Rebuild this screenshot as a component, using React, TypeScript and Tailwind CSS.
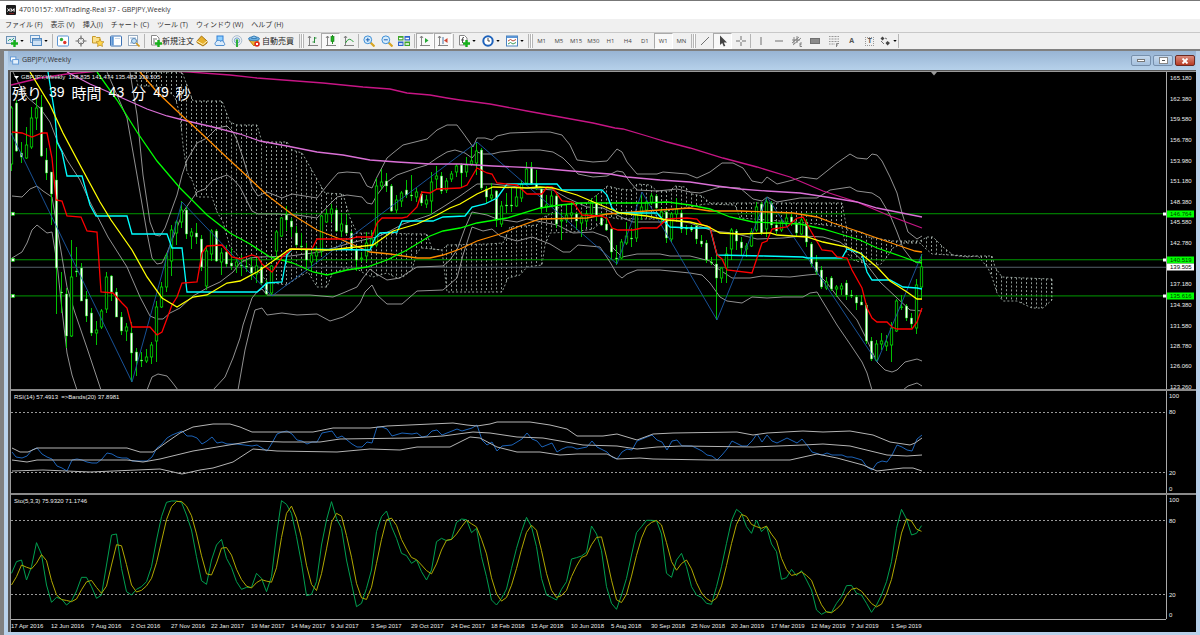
import type { ReactNode } from "react";

// bars are 5px apart, the first one sits at x = 11.5
const barX = (i: number) => 11.5 + i * 5;
const priceY = (p: number) => 78 + (165.18 - p) * 7.371;

// open, high, low, close
const candles = [
  [164, 106, 171, 108], [103, 100, 152, 151], [153, 142, 163, 157], [158, 127, 159, 145], [147, 107, 149, 118],
  [118, 97, 130, 108], [107, 95, 157, 156], [160, 148, 180, 173], [172, 172, 225, 194], [180, 128, 314, 268],
  [292, 272, 313, 293], [294, 288, 348, 336], [336, 240, 337, 277], [271, 247, 277, 272], [268, 263, 301, 301],
  [299, 291, 322, 316], [313, 308, 336, 333], [333, 321, 345, 330], [327, 309, 329, 311], [309, 272, 313, 277],
  [276, 275, 301, 292], [292, 288, 317, 317], [317, 312, 335, 331], [331, 323, 341, 327], [333, 322, 382, 353],
  [352, 348, 376, 361], [360, 352, 367, 361], [361, 349, 363, 357], [357, 342, 364, 345], [341, 301, 362, 307],
  [307, 282, 308, 287], [287, 253, 292, 256], [261, 225, 276, 230], [233, 220, 245, 222], [222, 201, 228, 210],
  [210, 206, 239, 234], [236, 228, 249, 232], [233, 223, 244, 237], [239, 235, 271, 267], [286, 247, 290, 251],
  [254, 229, 261, 231], [231, 229, 262, 261], [262, 248, 275, 253], [252, 245, 267, 264], [263, 248, 270, 266],
  [266, 257, 273, 262], [265, 255, 276, 266], [266, 260, 272, 267], [267, 257, 280, 273], [274, 258, 283, 266],
  [267, 265, 285, 283], [283, 280, 295, 294], [293, 265, 296, 266], [251, 230, 258, 232], [236, 217, 237, 218],
  [215, 206, 231, 220], [221, 218, 237, 227], [233, 226, 247, 245], [246, 233, 251, 247], [250, 243, 268, 260],
  [262, 251, 272, 255], [256, 246, 262, 252], [251, 215, 256, 216], [222, 209, 223, 214], [214, 204, 222, 209],
  [210, 208, 232, 231], [231, 213, 237, 224], [225, 215, 234, 233], [233, 231, 251, 249], [250, 248, 271, 260],
  [259, 252, 262, 258], [256, 232, 262, 243], [247, 230, 248, 239], [245, 178, 247, 186], [186, 169, 190, 182],
  [181, 173, 192, 186], [186, 184, 212, 211], [210, 195, 213, 200], [201, 191, 207, 193], [190, 180, 198, 195],
  [195, 175, 201, 196], [197, 188, 202, 192], [194, 191, 206, 203], [204, 195, 208, 200], [201, 172, 214, 182],
  [179, 166, 190, 176], [176, 172, 194, 191], [190, 178, 193, 181], [179, 171, 182, 174], [172, 164, 177, 166],
  [165, 163, 187, 173], [172, 157, 177, 165], [164, 147, 166, 161], [163, 142, 175, 151], [150, 148, 190, 188],
  [189, 186, 203, 197], [198, 183, 200, 195], [191, 190, 227, 220], [224, 201, 227, 206], [205, 193, 213, 206],
  [205, 188, 212, 206], [206, 187, 207, 197], [198, 180, 202, 184], [183, 162, 184, 169], [167, 162, 185, 184],
  [184, 170, 190, 188], [189, 188, 213, 208], [207, 195, 212, 205], [205, 191, 207, 196], [196, 193, 228, 224],
  [221, 212, 240, 220], [220, 204, 223, 215], [215, 202, 220, 213], [214, 212, 230, 221], [223, 212, 237, 217],
  [221, 210, 227, 214], [214, 198, 217, 202], [203, 195, 221, 215], [218, 216, 226, 225], [224, 217, 231, 230],
  [229, 228, 259, 252], [258, 245, 265, 259], [258, 239, 259, 242], [243, 222, 245, 236], [238, 228, 247, 239],
  [238, 212, 242, 214], [213, 194, 220, 207], [210, 200, 213, 202], [202, 193, 205, 196], [196, 194, 209, 208],
  [217, 208, 223, 212], [212, 210, 243, 238], [239, 212, 242, 214], [214, 198, 222, 209], [213, 210, 233, 229],
  [228, 225, 235, 229], [227, 225, 232, 230], [226, 224, 244, 239], [241, 235, 247, 244], [243, 240, 263, 260],
  [262, 257, 265, 263], [264, 255, 320, 278], [278, 267, 283, 268], [268, 247, 283, 254], [249, 228, 260, 230],
  [231, 229, 250, 241], [242, 237, 255, 248], [249, 243, 257, 246], [246, 228, 247, 232], [230, 202, 232, 207],
  [204, 202, 235, 233], [229, 197, 237, 202], [203, 201, 228, 225], [225, 221, 234, 231], [230, 219, 232, 222],
  [222, 213, 227, 218], [217, 214, 226, 222], [223, 221, 237, 233], [234, 217, 235, 220], [222, 219, 247, 242],
  [244, 242, 267, 264], [262, 255, 275, 272], [270, 266, 289, 287], [288, 277, 290, 282], [278, 276, 291, 289],
  [289, 285, 297, 287], [289, 283, 295, 286], [283, 280, 300, 295], [295, 290, 298, 296], [297, 295, 310, 303],
  [302, 295, 305, 305], [305, 303, 344, 341], [341, 337, 361, 359], [360, 340, 362, 344], [344, 333, 350, 341],
  [346, 335, 351, 342], [345, 322, 362, 328], [331, 299, 332, 301], [307, 295, 310, 307], [306, 304, 321, 318],
  [318, 313, 328, 324], [328, 279, 334, 285], [287, 254, 298, 267],
];

const bands = [
  "13,72 20,86 28,98 40,108 50,122 58,143 67,160 80,180 90,202 108,237 127,267 140,297 150,316 157,319 163,319 170,313 180,308 193,296 207,288 220,282 233,272 240,263 250,258 260,257 290,256 305,254 320,252 330,249 347,244 363,240 377,237 390,231 403,224 430,215 443,207 460,196 477,184 493,184 527,188 553,190 567,198 587,207 603,208 623,218 633,222 660,222 673,220 690,223 713,231 733,233 757,239 783,238 803,236 823,237 840,242 853,252 867,265 880,282 897,298 910,310 922,311",
  "130,72 137,115 143,175 150,222 155,235 160,236 165,228 177,195 182,175 187,160 197,143 207,138 217,128 227,126 233,132 237,140 243,158 252,187 258,196 267,192 282,198 292,194 317,198 330,182 338,173 347,172 360,173 367,186 372,188 377,177 387,158 393,153 403,145 427,139 437,130 447,125 457,125 463,133 473,147 477,138 485,138 492,140 497,136 510,133 537,132 550,132 562,135 570,145 577,160 593,162 607,161 617,149 622,152 627,162 637,174 657,174 663,172 687,174 697,178 710,172 722,163 733,163 743,168 752,181 762,183 767,177 777,184 793,180 802,177 817,179 827,171 837,163 850,154 857,158 867,159 872,154 877,155 882,161 890,177 897,193 902,213 908,232 917,239 922,236",
  "107,72 127,118 137,175 147,233 152,258 157,264 162,263 167,253 172,240 178,225 183,212 197,192 205,189 213,180 227,175 233,179 240,187 252,211 258,214 277,214 297,215 317,218 327,207 337,197 347,195 362,197 367,203 372,204 377,195 387,182 397,175 417,168 427,165 437,158 447,152 455,150 465,153 472,158 477,152 483,154 492,154 500,152 520,150 540,150 553,152 563,158 570,165 578,174 593,177 607,176 617,171 623,172 630,182 637,190 657,191 677,189 690,192 700,193 720,187 740,188 753,199 762,201 767,197 777,202 800,198 817,198 830,190 850,187 857,191 872,193 880,198 890,215 897,232 903,248 912,260 917,263 922,260",
  "12,196 22,197 30,189 37,186 43,191 52,197 55,215 67,287 75,313 87,348 101,390",
  "12,258 22,252 27,243 32,230 37,225 47,233 52,232 57,263 62,310 67,353 72,375 77,390",
  "147,390 152,377 158,374 167,376 172,382 178,390",
  "213,390 225,377 233,358 240,338 243,325 252,298 257,292 262,289 267,295 287,295 310,295 333,297 343,293 357,287 363,278 370,269 375,273 387,280 400,278 407,273 417,267 443,266 450,260 457,250 465,228 472,212 487,215 497,219 517,222 527,219 547,223 557,225 573,233 593,232 607,237 613,248 622,257 637,254 660,254 670,256 690,256 710,261 717,268 732,278 750,278 762,276 790,277 807,275 818,274 827,283 840,300 857,320 867,340 877,362 885,370 892,372 897,370 905,362 917,359 922,361",
  "238,390 245,350 251,325 255,310 262,308 267,315 282,313 297,315 317,314 330,321 343,317 353,311 360,303 365,292 372,285 377,295 387,304 402,304 417,291 443,290 457,278 463,255 472,227 483,231 492,229 500,236 517,241 532,237 550,244 563,252 570,252 578,245 600,247 610,262 617,274 622,278 627,274 637,270 660,270 690,273 702,275 710,283 720,297 727,301 742,303 752,297 767,298 783,297 803,297 810,293 817,292 823,302 837,325 852,347 862,362 867,373 872,390",
  "903,390 908,386 917,383 922,386",
];

const averages = [
  { color: "#c71585", points: "11,85 40,78 67,74 100,71 150,70 190,72 230,75 257,78 323,83 363,87 390,89 407,93 430,95 447,98 460,100 490,104 527,111 560,117 593,123 615,128 623,129 647,136 667,142 690,148 723,158 757,167 790,177 823,191 857,202 890,216 922,228" },
  { color: "#da70d6", points: "67,72 90,84 120,97 147,109 167,116 187,121 213,127 240,134 260,141 287,146 317,152 343,155 370,160 397,162 430,164 460,164 493,166 537,168 583,172 610,174 627,177 660,180 690,182 717,186 740,189 767,191 800,193 833,198 857,202 877,208 897,212 922,217" },
  { color: "#ff8c00", points: "140,72 157,92 177,111 200,132 220,151 235,165 250,179 267,195 293,215 317,230 340,239 370,252 390,254 417,258 430,258 443,255 460,249 477,241 500,234 520,226 540,219 587,218 607,214 633,212 660,210 690,208 710,211 740,211 770,212 793,213 817,217 833,223 857,231 877,238 903,247 915,251 922,252" },
  { color: "#00ff00", points: "97,72 117,100 137,132 157,161 180,188 207,215 230,233 250,244 270,257 293,263 313,272 327,275 347,270 367,267 387,260 407,250 430,236 443,231 460,228 477,223 507,218 540,208 560,205 580,203 627,203 647,203 667,202 690,205 710,209 730,217 753,222 800,224 823,229 840,234 860,240 877,248 903,257 917,262 922,263" },
  { color: "#00ffff", points: "48,72 55,115 57,142 62,152 67,176 82,176 90,205 96,216 127,216 132,234 167,234 172,248 182,248 187,292 257,292 267,283 282,282 287,255 292,249 370,250 375,238 380,233 397,232 402,221 433,221 443,217 465,216 472,207 485,204 497,198 507,184 557,184 562,190 602,190 607,195 612,208 618,213 657,213 663,220 670,227 690,228 710,228 717,255 765,256 803,257 807,258 842,258 847,249 862,254 867,272 872,280 890,280 903,287 917,288 922,289" },
  { color: "#ff0000", points: "12,132 22,133 32,137 42,133 47,133 52,158 56,200 62,201 67,216 81,217 87,231 97,232 101,292 113,293 122,303 127,308 132,327 150,327 157,335 162,332 172,305 177,297 182,283 197,282 202,253 207,246 222,245 232,257 240,259 252,255 258,257 262,264 272,272 282,257 292,249 312,249 317,239 350,239 357,237 372,237 377,223 382,218 402,218 407,217 417,207 422,192 430,193 437,189 460,188 467,185 477,168 487,173 492,174 497,183 517,185 527,194 542,194 547,187 552,187 562,201 573,202 582,215 600,216 607,218 612,228 618,230 633,230 642,228 657,228 667,219 687,218 697,219 702,225 710,227 717,255 722,259 727,270 752,273 762,243 767,241 772,229 787,227 797,218 803,217 812,233 822,250 832,251 837,257 847,258 852,270 862,288 867,308 872,318 877,322 887,322 892,327 897,329 912,329 917,322 922,308" },
  { color: "#ffff00", points: "30,72 50,105 63,133 80,165 100,202 111,220 132,250 147,277 162,298 177,307 193,297 207,295 227,283 240,281 257,272 273,261 290,249 330,250 347,248 373,245 393,231 417,224 437,215 450,208 460,204 477,194 493,187 527,188 540,187 553,188 577,195 603,206 620,213 647,216 667,220 690,222 707,226 720,233 740,234 770,233 777,235 807,237 823,242 847,247 860,253 877,267 890,281 907,292 917,299 922,299" },
];

const zigzag = "11,133 132,382 182,202 272,296 477,142 617,264 642,192 717,320 767,197 877,362 922,254";

// the two edges of the cloud
const spanA: number[][] = [
  [135, 72], [182, 72], [187, 85], [193, 101], [222, 101], [230, 122], [237, 125], [257, 125], [262, 142], [287, 142],
  [292, 150], [302, 153], [313, 172], [325, 193], [343, 194], [350, 218], [357, 233], [427, 234], [432, 249], [442, 250],
  [447, 245], [487, 244], [503, 243], [510, 227], [537, 225], [542, 218], [552, 213], [562, 205], [587, 203], [593, 198],
  [603, 190], [607, 186], [620, 189], [632, 190], [637, 184], [650, 185], [657, 191], [670, 191], [675, 186], [685, 187],
  [692, 194], [702, 196], [710, 203], [842, 203], [847, 230], [862, 232], [868, 237], [887, 240], [892, 241], [920, 241],
  [927, 237], [933, 237], [943, 247], [953, 255], [967, 256], [992, 256], [995, 267], [1002, 277], [1025, 278], [1052, 279],
];
const spanB: number[][] = [
  [135, 72], [138, 86], [157, 86], [167, 90], [175, 97], [180, 115], [183, 145], [187, 172], [193, 182], [197, 197],
  [212, 197], [217, 212], [223, 222], [230, 247], [240, 258], [250, 265], [260, 273], [267, 282], [287, 285], [297, 278],
  [308, 272], [317, 287], [327, 287], [332, 274], [343, 269], [357, 269], [367, 275], [373, 277], [387, 273], [397, 278],
  [403, 277], [412, 270], [417, 252], [422, 248], [433, 249], [442, 250], [447, 292], [502, 292], [508, 278], [520, 275],
  [527, 267], [542, 265], [545, 245], [550, 233], [573, 232], [593, 229], [600, 223], [607, 217], [620, 219], [657, 219],
  [660, 212], [690, 207], [705, 204], [735, 205], [740, 218], [807, 223], [842, 227], [847, 253], [853, 260], [867, 264],
  [880, 265], [887, 257], [893, 248], [903, 243], [920, 243], [925, 248], [932, 254], [950, 255], [967, 257], [978, 256],
  [988, 268], [992, 277], [997, 293], [1003, 301], [1017, 301], [1032, 308], [1043, 308], [1052, 300], [1052, 279],
];

const yAt = (line: number[][], x: number) => {
  const k = line.findIndex((p) => p[0] >= x);
  if (k <= 0) return line[0][1];
  const [x0, y0] = line[k - 1];
  const [x1, y1] = line[k];
  return y0 + ((y1 - y0) * (x - x0)) / (x1 - x0);
};

const rsi =
  "12,452 16,457 22,458 27,456 32,450 37,448 42,454 47,457 52,459 57,466 62,468 67,471 72,460 77,459 82,460 87,462 92,463 97,463 102,459 107,453 112,454 117,457 122,458 127,458 132,461 147,461 152,457 157,448 162,444 167,438 172,435 182,431 187,436 192,436 197,438 202,444 207,441 212,437 217,443 222,442 227,444 237,444 252,446 257,445 262,448 267,451 272,443 277,434 282,432 287,431 292,434 297,440 302,441 307,444 312,442 317,442 322,433 332,431 337,438 342,436 347,440 352,444 357,447 362,447 367,442 372,443 377,427 382,427 387,429 392,436 402,433 412,434 417,433 422,437 427,436 432,431 437,430 442,435 447,433 457,429 462,431 472,428 477,425 482,440 487,445 492,442 497,451 502,446 512,445 517,442 522,439 527,433 532,439 537,441 542,447 547,445 552,443 557,452 562,449 567,447 572,447 577,449 587,447 592,441 597,447 607,452 612,457 617,459 622,452 627,449 632,450 637,441 642,439 652,435 657,440 662,442 667,450 672,441 677,440 682,446 692,446 702,451 707,455 712,456 717,460 722,455 727,449 732,441 742,446 747,446 752,441 757,434 762,442 767,435 772,441 777,443 787,438 797,443 802,439 807,445 812,452 822,455 827,453 832,455 842,455 847,457 852,457 862,460 867,467 872,470 877,463 882,461 887,462 892,455 897,445 902,447 907,450 912,451 917,439 922,435";
const rsiBands = [
  "12,448 20,452 28,452 37,448 127,448 140,452 153,452 167,442 180,433 193,427 213,424 230,424 240,427 252,432 313,432 333,428 370,428 387,426 453,423 467,425 477,426 490,424 497,422 530,422 550,425 567,429 577,436 603,436 617,434 637,440 653,434 673,433 737,432 753,435 767,433 803,431 823,432 850,431 873,435 890,442 910,445 915,443 922,438",
  "12,460 27,462 37,460 127,460 143,462 160,459 193,451 217,447 253,441 283,442 320,442 340,439 410,438 443,436 473,432 490,433 517,437 543,438 583,445 617,446 637,449 657,447 683,446 753,447 803,445 823,444 850,446 887,455 907,456 922,455",
  "12,471 43,470 90,472 160,469 182,474 200,470 213,468 233,462 253,449 277,451 337,452 370,449 400,450 417,447 450,447 470,437 480,438 497,447 517,452 540,452 560,455 577,454 607,454 617,459 640,458 653,459 710,460 790,460 817,454 837,458 863,465 877,471 903,468 913,468 922,471",
];

// one sample per bar, three units to the pixel
const stoMain = [
  565, 530, 525, 585, 545, 473, 508, 600, 652, 637, 642, 660, 648, 618, 577, 577, 605, 640, 630, 540, 450, 447, 550, 620,
  630, 613, 605, 590, 545, 465, 395, 352, 348, 348, 352, 390, 435, 515, 587, 598, 525, 480, 463, 520, 548, 590, 613, 607,
  607, 565, 580, 620, 575, 450, 347, 358, 385, 455, 535, 632, 628, 590, 480, 405, 350, 400, 430, 525, 595, 665, 655, 610,
  555, 440, 395, 378, 425, 460, 505, 512, 535, 525, 560, 585, 555, 470, 460, 467, 463, 412, 402, 404, 443, 430,
  515, 575, 645, 660, 640, 612, 550, 490, 440, 397, 425, 485, 580, 630, 637, 645, 613, 590, 522, 518, 513, 502, 423, 447,
  497, 605, 655, 673, 630, 580, 510, 443, 425, 406, 406, 407, 447, 565, 577, 525, 505, 545, 605, 630, 637, 655, 658, 605,
  545, 475, 407, 373, 385, 425, 445, 405, 440, 425, 477, 500, 583, 578, 553, 572, 557, 585, 615, 675, 688, 680, 682, 655,
  635, 602, 601, 625, 630, 655, 682, 660, 630, 590, 530, 430, 373, 402, 450, 445, 422,
];
const stoSignal = stoMain.map((v, i) =>
  i === 0 ? 600 : i === 1 ? 575 : (v + stoMain[i - 1] + stoMain[i - 2]) / 3
);
const toPoints = (values: number[]) =>
  values.map((v, i) => `${barX(i)},${385 + v / 3}`).join(" ");

const prices = [
  165.18, 162.38, 159.58, 156.78, 153.98, 151.18, 148.38, 145.58, 142.78, 137.18, 134.38, 131.58, 128.78, 126.06, 123.26,
];
const orderLines = [146.764, 140.519, 135.616];
const dates = [
  "17 Apr 2016", "12 Jun 2016", "7 Aug 2016", "2 Oct 2016", "27 Nov 2016", "22 Jan 2017", "19 Mar 2017", "14 May 2017",
  "9 Jul 2017", "3 Sep 2017", "29 Oct 2017", "24 Dec 2017", "18 Feb 2018", "15 Apr 2018", "10 Jun 2018", "5 Aug 2018",
  "30 Sep 2018", "25 Nov 2018", "20 Jan 2019", "17 Mar 2019", "12 May 2019", "7 Jul 2019", "1 Sep 2019",
];
const menus = ["ファイル (F)", "表示 (V)", "挿入(I)", "チャート (C)", "ツール (T)", "ウィンドウ (W)", "ヘルプ (H)"];
const timeframes = ["M1", "M5", "M15", "M30", "H1", "H4", "D1", "W1", "MN"];

const Icon = ({ children }: { children: ReactNode }) => (
  <svg viewBox="0 0 12 12" className="h-3 w-3 shrink-0" fill="none" stroke="#707070" strokeWidth="1">
    {children}
  </svg>
);

const Plus = () => <path d="M8.500 5v7M5 8.500h7" stroke="#16b01c" strokeWidth="2.400" />;
const Axes = () => <path d="M2.500 1v10M1 10.500h10M1 3l1.500-2L4 3" stroke="#777" strokeWidth="0.900" />;

const Caret = () => (
  <svg viewBox="0 0 5 3" className="h-[2px] w-1 shrink-0 fill-black">
    <path d="M0 0h5L2.500 3z" />
  </svg>
);

const Sep = () => <span className="mx-px h-3.5 w-px shrink-0 bg-[#b5b5b5]" />;

const Grip = () => <span className="h-3.5 w-[3px] shrink-0 border-x border-[#b5b5b5] bg-white" />;

type ToolProps = { label: string; active?: boolean; caret?: boolean; children: ReactNode };

const Tool = ({ label, active, caret, children }: ToolProps) => (
  <button
    aria-label={label}
    className={
      active
        ? "flex h-4 flex-1 items-center justify-center gap-0.5 border border-b-white border-l-[#aaa] border-r-white border-t-[#aaa] bg-[#f8f8f8]"
        : "flex h-4 flex-1 items-center justify-center gap-0.5"
    }
  >
    {children}
    {caret && <Caret />}
  </button>
);

const Toolbar = () => (
  <div className="flex h-[17px] items-center border-t border-[#c8c8c8] bg-[#f0f0f0] pl-[3px] text-[#222]">
    <div className="flex w-[48px]">
      <Tool label="新規チャート" caret>
        <Icon>
          <rect x="0.500" y="1.500" width="9" height="7" fill="#dfeaf4" stroke="#6b8fb3" />
          <path d="M2 6l2-2 1.500 1.500L8 3" stroke="#3a8" />
          <Plus />
        </Icon>
      </Tool>
      <Tool label="プロファイル" caret>
        <Icon>
          <rect x="0.500" y="0.500" width="9" height="7" fill="#e9f2fb" stroke="#6d9bc9" />
          <rect x="2.500" y="3.500" width="9" height="7" fill="#cfe2f5" stroke="#4f86be" />
          <path d="M3 5h8" stroke="#4f86be" />
        </Icon>
      </Tool>
    </div>
    <Sep />
    <div className="flex w-[89px]">
      <Tool label="気配値表示">
        <Icon>
          <rect x="0.500" y="1" width="11" height="10" rx="1" fill="#fff" stroke="#5b95d5" />
          <circle cx="4.500" cy="4.500" r="1.700" fill="#2ea836" stroke="none" />
          <circle cx="7.800" cy="7.500" r="1.700" fill="#e03428" stroke="none" />
        </Icon>
      </Tool>
      <Tool label="データウィンドウ">
        <Icon>
          <circle cx="6" cy="6" r="3" />
          <path d="M6 0.500v4M6 7.500v4M0.500 6h4M7.500 6h4" strokeWidth="1.200" />
        </Icon>
      </Tool>
      <Tool label="ナビゲーター">
        <Icon>
          <path d="M0.500 1.500h3l1 1H8V8H0.500z" fill="#fbe08a" stroke="#c79a2b" />
          <path d="M8 4l1.200 2.500 2.800.3-2 1.900.5 2.800L8 10.200 5.500 11.500 6 8.700l-2-1.900 2.800-.3z" fill="#ffd54a" stroke="#b8891f" strokeWidth="0.700" />
        </Icon>
      </Tool>
      <Tool label="ターミナル">
        <Icon>
          <rect x="0.500" y="1" width="11" height="10" rx="1" fill="#fff" stroke="#3d72b4" />
          <path d="M2.500 1.500v9" stroke="#5b95d5" strokeWidth="2.500" />
          <path d="M5 3.500h5" stroke="#c6d6e8" />
        </Icon>
      </Tool>
      <Tool label="ストラテジーテスター">
        <Icon>
          <rect x="0.500" y="0.500" width="9" height="10" fill="#fff" stroke="#9aacbf" />
          <path d="M2 3h6M2 8h2" stroke="#8fb0d4" />
          <circle cx="6" cy="6" r="2.500" fill="#bfe0f8" stroke="#5b87b4" />
          <path d="M8 8l3.500 3.500" stroke="#d19a1d" strokeWidth="1.600" />
        </Icon>
      </Tool>
    </div>
    <Sep />
    <button className="flex items-center pl-1">
      <Icon>
        <path d="M1.500 0.500h5L9 3v7H1.500z" fill="#fff" stroke="#888" />
        <path d="M3 4h4M3 6h2M3 8h2" />
        <Plus />
      </Icon>
      <span className="w-[31px] whitespace-nowrap text-[8px]">新規注文</span>
    </button>
    <div className="flex w-[53px]">
      <Tool label="メタエディター">
        <Icon>
          <path d="M1 6l4.500-5L11 6v2L7 11 1 7.500z" fill="#e7b02c" stroke="#a87512" />
          <path d="M1 6l6 3.500L11 6" stroke="#fff1bd" />
        </Icon>
      </Tool>
      <Tool label="クラウド">
        <Icon>
          <rect x="3" y="1" width="6" height="5" fill="#8fd0ff" stroke="#2e7fd6" />
          <path d="M2 10.500a2 2 0 010-3.500 2.500 2.500 0 014.500-.5A2 2 0 0110 8a1.400 1.400 0 010 2.500z" fill="#dcecfb" stroke="#4f8fd0" />
        </Icon>
      </Tool>
      <Tool label="シグナル">
        <Icon>
          <circle cx="6" cy="5.500" r="4.800" stroke="#a9bdd0" />
          <circle cx="6" cy="5.500" r="2.600" stroke="#6fa3d8" />
          <path d="M6 5.500V12" stroke="#2fae3a" strokeWidth="2" />
          <circle cx="6" cy="5.500" r="1.200" fill="#2fae3a" stroke="none" />
        </Icon>
      </Tool>
    </div>
    <button className="flex items-center pl-0.5">
      <Icon>
        <path d="M1 5l5 6 4-4V5z" fill="#f0b52d" stroke="#b47d12" />
        <ellipse cx="6" cy="3.800" rx="5.500" ry="2" fill="#69aee0" stroke="#3a7fb8" />
        <path d="M3.500 3.500a2.500 2.500 0 015 0z" fill="#8cc6ee" stroke="#3a7fb8" />
        <circle cx="9" cy="9" r="2.800" fill="#e02a1c" stroke="none" />
        <rect x="8" y="8" width="2" height="2" fill="#fff" stroke="none" />
      </Icon>
      <span className="w-[38px] whitespace-nowrap pl-0.5 text-left text-[8px]">自動売買</span>
    </button>
    <Sep />
    <Grip />
    <div className="flex w-[53px]">
      <Tool label="バーチャート">
        <Icon>
          <Axes />
          <path d="M7.500 2v6M7.500 3h2M5.500 7h2" stroke="#2a8f3a" />
        </Icon>
      </Tool>
      <Tool label="ローソク足" active>
        <Icon>
          <Axes />
          <path d="M7.500 0v9" stroke="#1b9a1b" />
          <rect x="6" y="1.500" width="3" height="5" fill="#22b022" stroke="#127a12" strokeWidth="0.600" />
        </Icon>
      </Tool>
      <Tool label="ラインチャート">
        <Icon>
          <Axes />
          <path d="M2.500 8Q6 1 10.500 7" stroke="#2a9f3a" />
        </Icon>
      </Tool>
    </div>
    <Sep />
    <div className="flex w-[53px]">
      <Tool label="ズームイン">
        <Icon>
          <path d="M7.500 7.500l4 4" stroke="#d9a520" strokeWidth="2.200" />
          <circle cx="4.800" cy="4.800" r="3.900" fill="#d6ecfc" stroke="#3f8fd6" />
          <path d="M2.800 4.800h4M4.800 2.800v4" stroke="#1f63b4" />
        </Icon>
      </Tool>
      <Tool label="ズームアウト">
        <Icon>
          <path d="M7.500 7.500l4 4" stroke="#d9a520" strokeWidth="2.200" />
          <circle cx="4.800" cy="4.800" r="3.900" fill="#d6ecfc" stroke="#3f8fd6" />
          <path d="M2.800 4.800h4" stroke="#1f63b4" />
        </Icon>
      </Tool>
      <Tool label="整列">
        <Icon>
          <path d="M0 1h5.500v4.500H0zM6.500 6.500H12V11H6.500z" fill="#3fa52a" stroke="none" />
          <path d="M6.500 1H12v4.500H6.500zM0 6.500h5.500V11H0z" fill="#2d62c8" stroke="none" />
          <path d="M1 3.500h3.500M7.500 3.500H11M1 9h3.500M7.500 9H11" stroke="#fff" strokeWidth="1.500" />
        </Icon>
      </Tool>
    </div>
    <Sep />
    <div className="flex w-[36px]">
      <Tool label="自動スクロール" active>
        <Icon>
          <Axes />
          <path d="M6 3v5l3.500-2.500z" fill="#24a834" stroke="none" />
        </Icon>
      </Tool>
      <Tool label="チャートシフト" active>
        <Icon>
          <Axes />
          <path d="M6 2v7" stroke="#4d78a8" />
          <path d="M10.500 3v5L7 5.500z" fill="#d0432f" stroke="none" />
        </Icon>
      </Tool>
    </div>
    <Sep />
    <div className="flex w-[72px]">
      <Tool label="インディケータ" caret>
        <Icon>
          <path d="M1.500 0.500h5L9 3v7H1.500z" fill="#fff" stroke="#888" />
          <path d="M6 2.500Q4.500 2 4.500 4v4M3 5h3" stroke="#555" />
          <Plus />
        </Icon>
      </Tool>
      <Tool label="時間足設定" caret>
        <Icon>
          <circle cx="6" cy="6" r="4.700" fill="#fff" stroke="#1d62bb" strokeWidth="2" />
          <path d="M6 3v3h2" stroke="#444" />
        </Icon>
      </Tool>
      <Tool label="定型チャート" caret>
        <Icon>
          <rect x="0.500" y="1" width="11" height="10" fill="#fff" stroke="#4b83c0" />
          <path d="M1 2h10" stroke="#5b95d5" strokeWidth="2" />
          <path d="M2 6l2.500-1.500L7 6l3-1.500" stroke="#b74a3a" />
          <path d="M2 9l2.500-1.500L7 9l3-1.500" stroke="#3e9a5a" />
        </Icon>
      </Tool>
    </div>
    <Sep />
    <Grip />
    <div className="flex w-[157px] text-[6px] text-[#444]">
      {timeframes.map((tf) => (
        <Tool key={tf} label={tf} active={tf === "W1"}>
          {tf}
        </Tool>
      ))}
    </div>
    <Sep />
    <Grip />
    <div className="flex w-[53px]">
      <Tool label="ライン">
        <Icon>
          <path d="M2 10l8-8" />
        </Icon>
      </Tool>
      <Tool label="カーソル" active>
        <Icon>
          <path d="M3 0.500v9.500l2.200-2 1.600 3.500 1.500-.8L6.800 7.500H10z" fill="#444" stroke="none" />
        </Icon>
      </Tool>
      <Tool label="十字カーソル">
        <Icon>
          <path d="M6 1v4M6 7v4M1 6h4M7 6h4" />
        </Icon>
      </Tool>
    </div>
    <Sep />
    <div className="flex w-[145px]">
      <Tool label="垂直線">
        <Icon>
          <path d="M6 2v8" />
        </Icon>
      </Tool>
      <Tool label="水平線">
        <Icon>
          <path d="M2 6h8" />
        </Icon>
      </Tool>
      <Tool label="チャネル">
        <Icon>
          <path d="M1 8l7-6M2 10l8-7M1 5h8M3 2v7M6 1v7" strokeWidth="0.800" />
          <path d="M11 8H9v3.500h2M9 9.700h1.500" strokeWidth="0.800" />
        </Icon>
      </Tool>
      <Tool label="長方形">
        <Icon>
          <rect x="1.500" y="3.500" width="9" height="5" fill="#8a8a8a" />
        </Icon>
      </Tool>
      <Tool label="フィボナッチ">
        <Icon>
          <path d="M1 1.500h10M1 4h10M1 6.500h10M1 9h6" strokeDasharray="1 0.500" strokeWidth="0.700" />
          <path d="M8.500 12V8.500H11M8.500 10H10" strokeWidth="0.800" />
        </Icon>
      </Tool>
      <Tool label="テキスト">
        <span className="text-[7px] font-bold text-[#555]">A</span>
      </Tool>
      <Tool label="テキストラベル">
        <span className="flex h-[9px] w-[9px] items-center justify-center border border-dotted border-[#999] text-[7px] font-bold text-[#555]">
          T
        </span>
      </Tool>
      <Tool label="矢印" caret>
        <Icon>
          <path d="M3.500 1.500l2 2-2 2-2-2zM8.500 6l2.500 2-2.500 2.500L6.500 8z" fill="#444" stroke="none" />
          <path d="M2 6l3 3M6 3l2 1" />
        </Icon>
      </Tool>
    </div>
    <Sep />
  </div>
);

const AxisLabel = ({ top, children }: { top: number; children: ReactNode }) => (
  <span className="absolute left-[3px] -translate-y-1/2 leading-[8px]" style={{ top }}>
    {children}
  </span>
);

const Levels = ({ levels }: { levels: number[][] }) => (
  <div className="relative w-[30px] shrink-0 border-l border-[#aaa]">
    {levels.map(([value, top]) => (
      <span key={value} className="absolute left-0.5 -translate-y-1/2 leading-[8px]" style={{ top }}>
        {value}
      </span>
    ))}
  </div>
);

const Digits = ({ children }: { children: ReactNode }) => (
  <span className="text-sm leading-4">{children}</span>
);

const PricePane = () => {
  const cloud: number[] = [];
  for (let x = 136.5; x < 1052; x += 5) cloud.push(x);

  return (
    <div className="relative flex border-b-2 border-[#8a8a8a]">
      <svg className="h-[317px] min-w-0 flex-1" fill="none">
        <g transform="translate(-11 -72)">
          <g stroke="#b4c2ba" strokeWidth="0.800" strokeDasharray="2 2">
            {cloud.map((x) => (
              <path key={x} d={`M${x} ${yAt(spanA, x)}V${yAt(spanB, x)}`} />
            ))}
            <polyline points={spanA.join(" ")} />
            <polyline points={spanB.join(" ")} />
          </g>
          {orderLines.map((p) => (
            <path key={p} d={`M11 ${priceY(p)}h4000`} stroke="#009a00" />
          ))}
          <path d={`M11 ${priceY(139.505)}h4000`} stroke="#56606a" />
          {bands.map((points) => (
            <polyline key={points} points={points} stroke="#a0a0a0" strokeWidth="0.900" />
          ))}
          {candles.map(([open, high, low, close], i) => (
            <g key={i} stroke="#00d800">
              <path d={`M${barX(i)} ${high}V${low}`} strokeWidth="0.900" />
              <rect
                x={barX(i) - 1.2}
                y={Math.min(open, close)}
                width="2.400"
                height={Math.max(Math.abs(open - close), 0.5)}
                fill={close > open ? "#fff" : "#000"}
                strokeWidth={close > open ? 0.5 : 0.8}
              />
            </g>
          ))}
          <polyline points={zigzag} stroke="#1b5aa6" strokeWidth="0.900" />
          {averages.map((line) => (
            <polyline key={line.color} points={line.points} stroke={line.color} strokeWidth="1.300" />
          ))}
          {orderLines.map((p) => (
            <rect key={p} x="11.500" y={priceY(p) - 1.5} width="3" height="3" fill="#fff" stroke="#00e000" strokeWidth="0.600" />
          ))}
          <path d="M931 72h6l-3 3.500z" fill="#999" />
        </g>
      </svg>
      <div className="relative w-[30px] shrink-0 border-l border-[#aaa]">
        {prices.map((p) => (
          <AxisLabel key={p} top={priceY(p) - 72}>
            {p.toFixed(3)}
          </AxisLabel>
        ))}
        {orderLines.map((p) => (
          <span
            key={p}
            className="absolute left-0 w-[27px] -translate-y-1/2 bg-[#00ff00] pl-[3px] leading-[7px] text-[#004000]"
            style={{ top: priceY(p) - 72 }}
          >
            {p.toFixed(3)}
            <i className="absolute -left-1 top-0.5 h-[3px] w-[3px] bg-white" />
          </span>
        ))}
        <span
          className="absolute left-0 w-[27px] -translate-y-1/2 bg-white pl-[3px] leading-[7px] text-black"
          style={{ top: priceY(139.505) - 72 }}
        >
          139.505
        </span>
      </div>
      <p className="absolute left-[3px] top-px flex items-center gap-0.5 whitespace-pre leading-[8px]">
        <svg viewBox="0 0 5 3" className="h-[3px] w-[5px] fill-white">
          <path d="M0 0h5L2.500 3z" />
        </svg>
        GBPJPY,Weekly  138.835 141.474 135.482 139.505
      </p>
      <p className="absolute left-px top-3 flex gap-[7px] font-['Liberation_Sans','Noto_Sans_CJK_JP',sans-serif] text-[15px] leading-[19px] text-white">
        <span>残り</span>
        <Digits>39</Digits>
        <span>時間</span>
        <Digits>43</Digits>
        <span>分</span>
        <Digits>49</Digits>
        <span>秒</span>
      </p>
    </div>
  );
};

const RsiPane = () => (
  <div className="relative flex border-b-2 border-[#8a8a8a]">
    <svg className="h-[102px] min-w-0 flex-1" fill="none">
      <g transform="translate(-11 -391)">
        <path d="M11 412.500h4000M11 472.500h4000" stroke="#999" strokeDasharray="2 2" />
        <polyline points={rsi} stroke="#1c63b8" />
        {rsiBands.map((points) => (
          <polyline key={points} points={points} stroke="#b4b4b4" />
        ))}
      </g>
    </svg>
    <Levels levels={[[100, 5], [80, 21], [20, 82], [0, 98]]} />
    <p className="absolute left-[3px] top-0.5 whitespace-pre leading-[8px]">RSI(14) 57.4913  =&gt;Bands(20) 37.8981</p>
  </div>
);

const StoPane = () => (
  <div className="relative flex">
    <svg className="h-[124px] min-w-0 flex-1" fill="none">
      <g transform="translate(-11 -495)">
        <path d="M11 520.500h4000M11 594.500h4000" stroke="#999" strokeDasharray="2 2" />
        <polyline points={toPoints(stoMain)} stroke="#00a050" />
        <polyline points={toPoints(stoSignal)} stroke="#b0a800" />
      </g>
    </svg>
    <Levels levels={[[100, 5], [80, 26], [20, 100], [0, 120]]} />
    <p className="absolute left-[3px] top-0.5 leading-[8px]">Sto(5,3,3) 75.9320 71.1746</p>
  </div>
);

const App = () => {
  return (
    <div className="flex min-h-screen flex-col overflow-hidden border-t border-[#777] bg-[#f0f0f0] font-['Open_Sans','Noto_Sans_CJK_JP',sans-serif] text-[#333]">
      <header className="flex h-[18px] items-center gap-[3px] bg-white pl-1.5 text-[7px]">
        <svg viewBox="0 0 10 10" className="h-[10px] w-[10px]">
          <rect width="10" height="10" rx="1" fill="#1b1b1b" />
          <path d="M1.500 3.500l2.500 3M4 3.500l-2.500 3M5.200 6.700v-3l1.400 2 1.500-2v3" stroke="#fff" fill="none" />
          <path d="M3 8.500h5" stroke="#d22" strokeWidth="0.500" />
        </svg>
        <h1>47010157: XMTrading-Real 37 - GBPJPY,Weekly</h1>
      </header>
      <nav className="flex h-[13px] items-center gap-2 pl-[5px] text-[7px]">
        {menus.map((m) => (
          <button key={m} className="whitespace-nowrap">
            {m}
          </button>
        ))}
      </nav>
      <Toolbar />

      <main className="flex-1 border-l-4 border-t-2 border-[#808080] bg-[#b9d1ea]">
        <div className="border-x-4 border-[#b9d1ea]">
          <div className="flex h-[19px] items-center gap-[3px] bg-gradient-to-b from-[#98b4d4] to-[#b6d1ea] pl-0.5 text-[7px]">
            <svg viewBox="0 0 10 10" className="h-[9px] w-[9px]" fill="#fff" stroke="#5b95d5">
              <rect x="0.500" y="1" width="6" height="4.500" />
              <rect x="3" y="4" width="6.500" height="5" fill="#e4f0fb" />
            </svg>
            <h2>GBPJPY,Weekly</h2>
            <div className="ml-auto mr-px flex gap-0.5">
              <button aria-label="最小化" className="flex h-[11px] w-5 items-center justify-center rounded-xs border border-[#7790ad] bg-gradient-to-b from-[#c5d8ec] to-[#a5c0de]">
                <span className="h-[3px] w-2 border border-[#777] bg-white" />
              </button>
              <button aria-label="最大化" className="flex h-[11px] w-5 items-center justify-center rounded-xs border border-[#7790ad] bg-gradient-to-b from-[#c5d8ec] to-[#a5c0de]">
                <span className="h-[5px] w-[7px] border-2 border-white bg-[#555] outline outline-[#888]" />
              </button>
              <button aria-label="閉じる" className="flex h-[11px] w-5 items-center justify-center rounded-xs border border-[#6b2a22] bg-gradient-to-b from-[#d98a7c] to-[#b83a22]">
                <svg viewBox="0 0 8 6" className="h-1.5 w-2" stroke="#fff" strokeWidth="1.800">
                  <path d="M1.500 0.500l5 5M6.500 0.500l-5 5" />
                </svg>
              </button>
            </div>
          </div>
          <div className="border-l-2 border-t border-[#555] bg-black font-['Liberation_Sans',sans-serif] text-[6px] text-[#ececec]">
            <div className="border-l border-t border-[#9a9a9a]">
              <PricePane />
              <RsiPane />
              <StoPane />
              <div className="mr-[30px] flex h-[13px] border-t border-[#aaa]">
                {dates.map((d) => (
                  <time key={d} className="w-10 shrink-0 whitespace-nowrap leading-[12px]">
                    {d}
                  </time>
                ))}
              </div>
            </div>
          </div>
        </div>
      </main>
    </div>
  );
};

export default App;
